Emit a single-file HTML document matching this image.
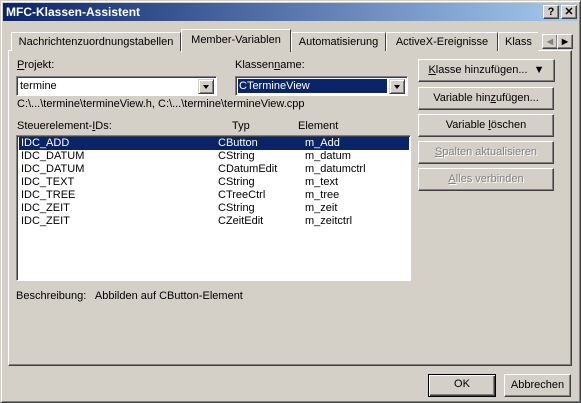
<!DOCTYPE html>
<html><head><style>
*{box-sizing:border-box}
body{margin:0;width:581px;height:403px;background:#d4d0c8;font-family:"Liberation Sans",sans-serif;font-size:11px;color:#000;position:relative;overflow:hidden}
.a{position:absolute;white-space:nowrap}
.win{position:absolute;left:0;top:0;width:581px;height:403px;border:1px solid;border-color:#d4d0c8 #404040 #404040 #d4d0c8;box-shadow:inset 1px 1px 0 #fff,inset -1px -1px 0 #808080}
.title{left:3px;top:3px;width:575px;height:18px;background:linear-gradient(90deg,#0a246a,#a6caf0);color:#fff;font-weight:bold;font-size:12px;line-height:18px;padding-left:3px}
.tb{width:16px;height:14px;background:#d4d0c8;border:1px solid;border-color:#fff #404040 #404040 #fff;box-shadow:inset -1px -1px 0 #808080;font-weight:bold;text-align:center;line-height:12px;color:#000;font-size:11px}
.btn{background:#d4d0c8;border:1px solid;border-color:#fff #404040 #404040 #fff;box-shadow:inset -1px -1px 0 #808080;text-align:center;line-height:20px}
.dis{color:#808080;text-shadow:1px 1px 0 #fff}
.panel{left:8px;top:50px;width:564px;height:316px;border:1px solid;border-color:#fff #404040 #404040 #fff;box-shadow:inset -1px -1px 0 #808080}
.tab{top:30px;height:21px;border:1px solid;border-bottom:none;border-color:#fff #404040 transparent #fff;line-height:19px;padding:0 6px;background:#d4d0c8;text-align:center}
.sunk{border:1px solid;border-color:#808080 #fff #fff #808080;box-shadow:inset 1px 1px 0 #404040;background:#fff}
.dd{position:absolute;right:2px;top:2px;width:16px;height:15px;background:#d4d0c8;border:1px solid;border-color:#d4d0c8 #404040 #404040 #d4d0c8;box-shadow:inset 1px 1px 0 #fff,inset -1px -1px 0 #808080}
.dd:after{content:"";position:absolute;left:4px;top:5px;border-left:3.5px solid transparent;border-right:3.5px solid transparent;border-top:4px solid #000}
u{text-decoration:underline}
.row{position:absolute;left:2px;width:390px;height:13px;line-height:13px}
.row span{position:absolute}
</style></head><body>
<div class="win"></div>
<div class="a title">MFC-Klassen-Assistent</div>
<div class="a tb" style="left:543px;top:5px">?</div>
<div class="a tb" style="left:561px;top:5px">✕</div>

<div class="a panel"></div>
<div class="a tab" style="left:11px;width:170px;top:32px;height:19px">Nachrichtenzuordnungstabellen</div>
<div class="a tab" style="left:291px;width:95px;top:32px;height:19px">Automatisierung</div>
<div class="a tab" style="left:386px;width:112px;top:32px;height:19px">ActiveX-Ereignisse</div>
<div class="a tab" style="left:498px;width:40px;top:32px;height:19px;border-right:none;text-align:left">Klass</div>
<div class="a tab" style="left:181px;top:29px;width:110px;height:23px;line-height:21px;z-index:2">Member-Variablen</div>
<div class="a tb" style="left:542px;top:34px;height:15px;color:#808080;font-size:8px;line-height:13px">◀</div>
<div class="a tb" style="left:557px;top:34px;height:15px;font-size:8px;line-height:13px">▶</div>

<div class="a" style="left:17px;top:59px"><u>P</u>rojekt:</div>
<div class="a sunk" style="left:16px;top:76px;width:201px;height:20px"><span class="a" style="left:3px;top:3px">termine</span><div class="dd"></div></div>
<div class="a" style="left:235px;top:59px">Klassen<u>n</u>ame:</div>
<div class="a sunk" style="left:235px;top:76px;width:173px;height:20px"><span class="a" style="left:2px;top:2px;width:149px;height:14px;background:#0a246a;color:#fff;outline:1px dotted #fff;padding-left:1px;line-height:14px">CTermineView</span><div class="dd"></div></div>
<div class="a" style="left:17px;top:98px">C:\...\termine\termineView.h, C:\...\termine\termineView.cpp</div>

<div class="a" style="left:17px;top:120px">Steuerelement-<u>I</u>Ds:</div>
<div class="a" style="left:232px;top:120px">Typ</div>
<div class="a" style="left:298px;top:120px">Element</div>
<div class="a sunk" style="left:16px;top:135px;width:395px;height:146px">
<div class="row" style="top:1px;background:#0a246a;color:#fff"><span style="left:2px">IDC_ADD</span><span style="left:199px">CButton</span><span style="left:286px">m_Add</span></div>
<div class="row" style="top:14px"><span style="left:2px">IDC_DATUM</span><span style="left:199px">CString</span><span style="left:286px">m_datum</span></div>
<div class="row" style="top:27px"><span style="left:2px">IDC_DATUM</span><span style="left:199px">CDatumEdit</span><span style="left:286px">m_datumctrl</span></div>
<div class="row" style="top:40px"><span style="left:2px">IDC_TEXT</span><span style="left:199px">CString</span><span style="left:286px">m_text</span></div>
<div class="row" style="top:53px"><span style="left:2px">IDC_TREE</span><span style="left:199px">CTreeCtrl</span><span style="left:286px">m_tree</span></div>
<div class="row" style="top:66px"><span style="left:2px">IDC_ZEIT</span><span style="left:199px">CString</span><span style="left:286px">m_zeit</span></div>
<div class="row" style="top:79px"><span style="left:2px">IDC_ZEIT</span><span style="left:199px">CZeitEdit</span><span style="left:286px">m_zeitctrl</span></div>
</div>

<div class="a btn" style="left:418px;top:59px;width:137px;height:23px;line-height:21px"><u>K</u>lasse hinzufügen... &nbsp;▼</div>
<div class="a btn" style="left:418px;top:87px;width:136px;height:23px;line-height:21px">Variable hin<u>z</u>ufügen...</div>
<div class="a btn" style="left:418px;top:114px;width:136px;height:23px;line-height:21px">Variable <u>l</u>öschen</div>
<div class="a btn dis" style="left:418px;top:141px;width:136px;height:23px;line-height:21px"><u>S</u>palten aktualisieren</div>
<div class="a btn dis" style="left:418px;top:168px;width:136px;height:23px;line-height:21px"><u>A</u>lles verbinden</div>

<div class="a" style="left:16px;top:290px">Beschreibung:&nbsp;&nbsp; Abbilden auf CButton-Element</div>

<div class="a btn" style="left:428px;top:374px;width:68px;height:23px;line-height:19px;border:1px solid #000;box-shadow:inset 1px 1px 0 #fff,inset -1px -1px 0 #404040,inset -2px -2px 0 #808080">OK</div>
<div class="a btn" style="left:504px;top:374px;width:67px;height:23px;line-height:21px">Abbrechen</div>
</body></html>
